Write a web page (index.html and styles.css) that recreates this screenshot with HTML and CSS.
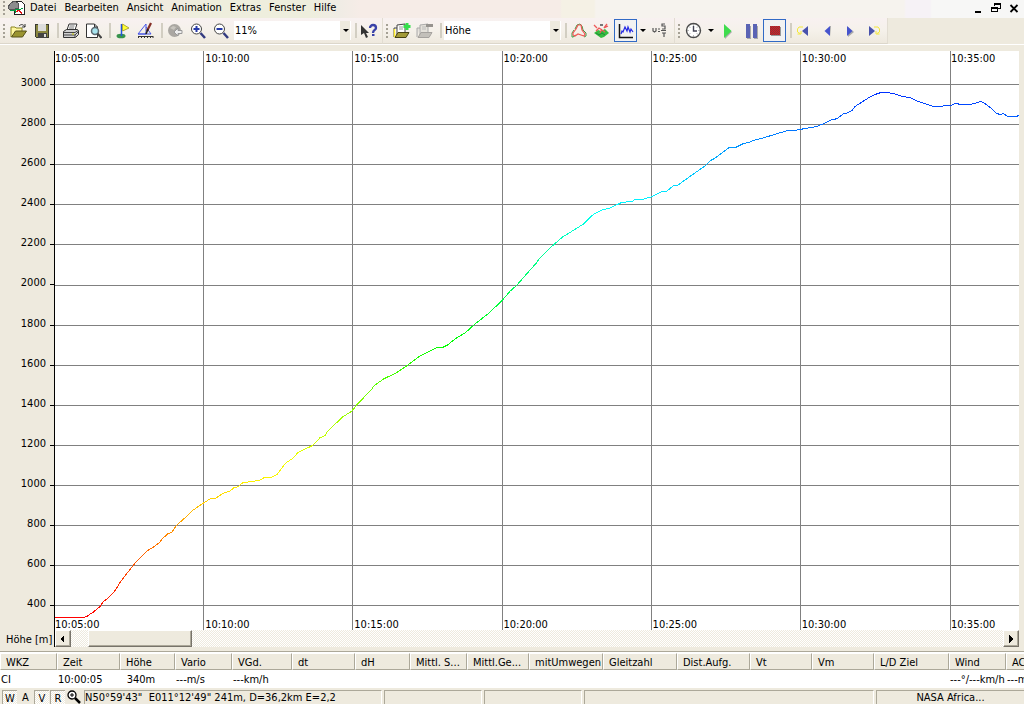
FILE: index.html
```html
<!DOCTYPE html>
<html lang="de">
<head>
<meta charset="utf-8">
<title>Höhe</title>
<link rel="stylesheet" href="styles.css">
</head>
<body>
<header class="menubar">
  <span class="grip"></span>
  <svg class="app-icon" width="18" height="16" viewBox="0 0 18 16" shape-rendering="crispEdges"><path d="M6 1h7l3 3v10H6z" fill="#fff" stroke="#222"/><path d="M0 7l2-3 4-3 4 2 1 5-4 1H1z" fill="#8c8c8c" stroke="#555"/><path d="M2 10h5v3M7 9l4 1 4-2" fill="none" stroke="#00a040"/><path d="M8 12l3-2 3 4" fill="none" stroke="#e01010"/></svg>
  <nav class="menus">
    <button>Datei</button><button>Bearbeiten</button><button>Ansicht</button><button>Animation</button><button>Extras</button><button>Fenster</button><button>Hilfe</button>
  </nav>
  <div class="window-controls">
    <button aria-label="Minimieren"><svg width="10" height="10" viewBox="0 0 10 10" shape-rendering="crispEdges"><path d="M2 8h6v2H2z"/></svg></button>
    <button aria-label="Wiederherstellen"><svg width="10" height="10" viewBox="0 0 10 10" shape-rendering="crispEdges"><path d="M3 0h7v6H7V5h2V2H4v1H3zM0 4h7v5H0zM1 6v2h5V6z" fill-rule="evenodd"/></svg></button>
    <button aria-label="Schließen"><svg width="10" height="10" viewBox="0 0 10 10"><path d="M1.500 2l7 7M8.500 2l-7 7" stroke="#000" stroke-width="1.800"/></svg></button>
  </div>
</header>

<div class="toolbars">
  <div class="band">
    <span class="grip"></span>
    <button class="tool" aria-label="Öffnen"><svg width="18" height="16" viewBox="0 0 18 16"><path d="M1 14V4h4l1 1h6v3" fill="#fff7a0" stroke="#8a8420"/><path d="M1.500 14l4-6h11l-4 6z" fill="#9a9430" stroke="#55501a"/><path d="M9 3c2-2 4-2 6 1M15 1v3h-3" fill="none" stroke="#333"/></svg></button>
    <button class="tool" aria-label="Speichern"><svg width="16" height="16" viewBox="0 0 16 16" shape-rendering="crispEdges"><path d="M1 1h14v14H2l-1-1z" fill="#8a8740"/><path d="M1.500 1.500h13v13h-12l-1-1z" fill="none" stroke="#3a3a30"/><path d="M4 1h8v7H4z" fill="#dcdcdc"/><path d="M4 10h9v5H4z" fill="#444"/><path d="M10 11h2v3h-2z" fill="#ddd"/></svg></button>
    <span class="sep"></span>
    <button class="tool" aria-label="Drucken"><svg width="18" height="16" viewBox="0 0 18 16"><path d="M5 7l2-6h8l-2 6" fill="#fff" stroke="#333"/><path d="M7.500 3h5M7 5h5" stroke="#777"/><path d="M1.500 8.500l3-2h11l1 1v4l-3 3h-12z" fill="#d0d0d0" stroke="#333"/><path d="M2 9.500h11l3-2M2 12h11v2M13 12l3-3" fill="none" stroke="#444"/><path d="M10 11h2" stroke="#cc0"/></svg></button>
    <button class="tool" aria-label="Seitenansicht"><svg width="17" height="16" viewBox="0 0 17 16"><path d="M1.500 1h8l3 3v10.500h-11z" fill="#fff" stroke="#333"/><path d="M9.500 1v3h3" fill="none" stroke="#333"/><circle cx="10" cy="8" r="3.500" fill="#a8e4ee" stroke="#5b6870" stroke-width="1.500"/><path d="M12.500 10.500l4 4.500" stroke="#444" stroke-width="2"/></svg></button>
    <span class="sep"></span>
    <button class="tool" aria-label="Flagge"><svg width="16" height="16" viewBox="0 0 16 16"><ellipse cx="6" cy="13" rx="4.500" ry="2.300" fill="#37934c"/><path d="M6.500 1v12" stroke="#2255dd" stroke-width="1.500"/><path d="M7.500 1l6.500 4-6.500 3z" fill="#ff3" stroke="#b2a936"/></svg></button>
    <button class="tool" aria-label="Zeichnen"><svg width="17" height="17" viewBox="0 0 17 17"><path d="M1 12L9 2v10zM9 5l5 7H1" fill="none" stroke="#4656e8"/><path d="M14 1l-4 8" stroke="#852f26" stroke-width="2.200"/><path d="M11 7l-2 5" stroke="#222" stroke-width="1.600"/><path d="M1 14.500h15M1.500 14v2M4.500 14v2M7.500 14v2M10.500 14v2M13.500 14v2M16 14v2" stroke="#333"/></svg></button>
    <span class="sep"></span>
    <button class="tool" aria-label="Globus"><svg width="16" height="16" viewBox="0 0 16 16"><circle cx="7.500" cy="7.500" r="6.500" fill="#aaa7a2"/><path d="M3 5l3-2 3 1-2 3z" fill="#c8c5bf"/><path d="M7 9l4-4v2.500h4v3h-4V13z" fill="#eee" stroke="#999"/></svg></button>
    <button class="tool" aria-label="Vergrößern"><svg width="16" height="16" viewBox="0 0 16 16"><circle cx="6.500" cy="6" r="5" fill="#fff" stroke="#444"/><path d="M3.500 6h6M6.500 3v6" stroke="#2639a8" stroke-width="2"/><path d="M10.500 10l4.500 5" stroke="#333b80" stroke-width="2.500"/></svg></button>
    <button class="tool" aria-label="Verkleinern"><svg width="16" height="16" viewBox="0 0 16 16"><circle cx="6.500" cy="6" r="5" fill="#fff" stroke="#444"/><path d="M3.500 6h6" stroke="#2639a8" stroke-width="2"/><path d="M10.500 10l4.500 5" stroke="#333b80" stroke-width="2.500"/></svg></button>
    <span class="combo"><select aria-label="Zoom"><option>11%</option></select></span>
    <span class="sep"></span>
    <button class="tool" aria-label="Kontexthilfe"><svg width="18" height="16" viewBox="0 0 18 16"><path d="M1 2v10l3-2 2 5 2-1-2-4h3z" fill="#333"/><path d="M10 5c0-4 6-4 6 0 0 2-3 2-3 5" fill="none" stroke="#3942a8" stroke-width="2.300"/><path d="M12 11h2.500v2H12z" fill="#3942a8"/></svg></button>
  </div>
  <div class="band">
    <span class="grip"></span>
    <button class="tool" aria-label="Flug hinzufügen"><svg width="18" height="17" viewBox="0 0 18 17"><path d="M1 15V6h3M4 13V3l8-1v9" fill="#fff" stroke="#444"/><path d="M1.500 7v8" stroke="#fe3" stroke-width="1.500"/><path d="M6 5h4M6 7h4" stroke="#999"/><path d="M2 15.500l3-5h11l-3 5z" fill="#a29a38" stroke="#464213"/><path d="M10.500 4.500h7M14 1v7" stroke="#36df4c" stroke-width="3"/></svg></button>
    <button class="tool" aria-label="Flug entfernen"><svg width="18" height="17" viewBox="0 0 18 17"><path d="M1 15V6h3M4 13V3l8-1v9" fill="#e4e1da" stroke="#aaa"/><path d="M6 5h4M6 7h4" stroke="#bbb"/><path d="M2 15.500l3-5h11l-3 5z" fill="#c3c0ba" stroke="#a5a29e"/><path d="M10 3.500h7" stroke="#96938f" stroke-width="3"/></svg></button>
    <span class="sep"></span>
    <span class="combo"><select aria-label="Anzeige"><option>Höhe</option></select></span>
    <span class="sep"></span>
    <button class="tool" aria-label="Strecke"><svg width="16" height="16" viewBox="0 0 16 16"><path d="M4 6l2-4 3-1 2 2 1 4 3 3v3l-2 1M5 12l-3 2H1v-4l2-3" fill="none" stroke="#3a9c48"/><path d="M2 12v-2l3-4 2-4h3l1 5 3 4-1 2-3-1-3-1-3 2z" fill="none" stroke="#f25555" stroke-width="1.200"/></svg></button>
    <button class="tool" aria-label="3D-Ansicht"><svg width="17" height="16" viewBox="0 0 17 16"><path d="M1 10l4-3 3 1 4-2 4 4-5 4-3 1z" fill="#35bd3f"/><path d="M3 10l3 2 3-2 3 2" stroke="#1f8a38" fill="none"/><path d="M1 2l3 3M3 8l3-3 6 4M14 1l-3 4 4-2M7 10l2-4" fill="none" stroke="#ed5959" stroke-width="1.300"/><path d="M7 1h3v2H7z" fill="#777"/></svg></button>
    <button class="tool active first" aria-label="Diagramm"><svg width="16" height="16" viewBox="0 0 16 16"><path d="M1.500 1v13.500H15" fill="none" stroke="#111" stroke-width="1.500"/><path d="M3 11l1-3 1 1 2-5 2 4 1-4 2 5 1-3 2 3" fill="none" stroke="#2429e4" stroke-width="1.200"/></svg></button>
    <button class="drop" aria-label="Diagrammtyp"></button>
    <button class="tool" aria-label="Geschwindigkeit"><svg width="16" height="16" viewBox="0 0 16 16"><g fill="none" stroke="#555" stroke-width="1.200"><path d="M1 5v3l1.500 1L4 8V5M6 6h2M6 8.500h2M9 7.500h5M13 1h-3v2h3v3h-3M10 10h4M12 10v4"/></g></svg></button>
  </div>
  <div class="band">
    <span class="grip"></span>
    <button class="tool" aria-label="Zeit"><svg width="17" height="17" viewBox="0 0 17 17"><circle cx="8.500" cy="8.500" r="7" fill="#fff" stroke="#4b4b4b" stroke-width="1.400"/><path d="M8.500 4v5H12" fill="none" stroke="#445" stroke-width="1.400"/><path d="M8.500 2.500v1M8.500 13.500v1M2.500 8.500h1M13.500 8.500h1M4 4.500l1 1M13 4.500l-1 1M4 12.500l1-1M13 12.500l-1-1" stroke="#777"/></svg></button>
    <button class="drop" aria-label="Zeitfaktor"></button>
    <button class="tool" aria-label="Start"><svg width="16" height="16" viewBox="0 0 16 16"><path d="M5 3v13l7-7z" fill="#aaa"/><path d="M4 1v14l7.500-7z" fill="#3fdc4d"/></svg></button>
    <button class="tool" aria-label="Pause"><svg width="16" height="16" viewBox="0 0 16 16" shape-rendering="crispEdges"><path d="M4 3h4v13H4zM11 3h4v13h-4z" fill="#aaa"/><path d="M3 1h4v14H3zM10 1h4v14h-4z" fill="#5a63b4"/></svg></button>
    <button class="tool active first" aria-label="Stopp"><svg width="16" height="16" viewBox="0 0 16 16" shape-rendering="crispEdges"><defs><pattern id="red" width="2" height="2" patternUnits="userSpaceOnUse"><path d="M0 0h2v2H0z" fill="#d81b22"/><path d="M0 0h1v1H0zM1 1h1v1H1z" fill="#82383d"/></pattern></defs><path d="M4 4h10v9H4z" fill="#999"/><path d="M3 3h10v9H3z" fill="url(#red)"/></svg></button>
    <span class="sep"></span>
    <button class="tool" aria-label="Anfang"><svg width="16" height="16" viewBox="0 0 16 16"><path d="M12 3v10L6 8z" fill="#4852ac"/><path d="M7 4H3L1.500 6v3L4 10.500M1.500 11H5V8" fill="none" stroke="#f4e83a"/></svg></button>
    <button class="tool" aria-label="Zurück"><svg width="16" height="16" viewBox="0 0 16 16"><path d="M12 3v11L11 3z" fill="#aaa"/><path d="M11 3v10L5.500 8z" fill="#4654cd"/></svg></button>
    <button class="tool" aria-label="Vor"><svg width="16" height="16" viewBox="0 0 16 16"><path d="M6 4v10l6-5z" fill="#aaa"/><path d="M5 3v10l5.500-5z" fill="#4654cd"/></svg></button>
    <button class="tool" aria-label="Ende"><svg width="16" height="16" viewBox="0 0 16 16"><path d="M4 3v10l6-5z" fill="#4852ac"/><path d="M9 4h4l1.500 2v3L12 10.500M14.500 11H11V8" fill="none" stroke="#f4e83a"/></svg></button>
  </div>
</div>

<main class="chart">
  <ol class="scale">
    <li>3000</li><li>2800</li><li>2600</li><li>2400</li><li>2200</li><li>2000</li><li>1800</li><li>1600</li><li>1400</li><li>1200</li><li>1000</li><li>800</li><li>600</li><li>400</li>
  </ol>
  <div class="plot">
    <svg class="graph" viewBox="55 51 964 579" preserveAspectRatio="none" shape-rendering="crispEdges">
      <defs>
        <linearGradient id="height" gradientUnits="userSpaceOnUse" x1="0" y1="617" x2="0" y2="92">
          <stop offset="0" stop-color="#f00"/><stop offset=".06" stop-color="#ff3000"/><stop offset=".15" stop-color="#ff8000"/><stop offset=".25" stop-color="#ffee00"/><stop offset=".3" stop-color="#f0ff00"/><stop offset=".41" stop-color="#80ff00"/><stop offset=".52" stop-color="#00ff00"/><stop offset=".6" stop-color="#00ff40"/><stop offset=".7" stop-color="#00ffa0"/><stop offset=".78" stop-color="#00ffff"/><stop offset=".87" stop-color="#00b0ff"/><stop offset=".94" stop-color="#0068ff"/><stop offset="1" stop-color="#0030ff"/>
        </linearGradient>
      </defs>
      <path class="grid" d="M55 84.500H1019M55 124.500H1019M55 164.500H1019M55 204.500H1019M55 244.500H1019M55 285.500H1019M55 325.500H1019M55 365.500H1019M55 405.500H1019M55 445.500H1019M55 485.500H1019M55 525.500H1019M55 565.500H1019M55 605.500H1019M203.500 51V630M352.500 51V630M502.500 51V630M651.500 51V630M800.500 51V630M950.500 51V630"/>
      <polyline class="curve" points="55,617.500 84,617.500 87,616.300 90,614 93,612.300 97,609 100,606.700 103,602 108,598 114,592 118,586 121,581 128,572 136,562 148,550.300 154,546.700 160,542 162,539 168,533.700 172,532 177,524.700 183,519.700 192,511 197,507.300 203,503.300 210,499 216,498 223,493.300 230,491 234,487.700 238,486.700 243,482.500 253,481.500 260,480 264,477.700 272,477 277,474.700 282,467.700 286,462.700 293,458.300 298,452.500 313,445.300 320,437.700 325,435.700 328,430.700 343,416.700 352,411 357,404.500 364,397.300 372,389 374,385.700 384,378.700 396,373 407,365.700 419,356.700 428,352 437,347.700 443,347.300 448,344.700 455,339 465,333 475,324 490,312.300 495,307.300 502,300.500 510,291.300 517,285 527,273.500 537,262.300 539,259 550,248 553,245.300 563,236.700 567,234.300 575,229.300 584,223.700 590,217.300 595,213.300 603,209.700 610,208 622,202.300 632,201.500 635,199.500 644,199 652,196.700 662,191.700 667,191 673,186 678,185 693,174.300 705,166 711,160.300 714,158.700 722,153 729,147.700 736,147.300 743,143.700 749,142.300 753,140.500 762,138.300 775,134.300 787,130.700 795,130.300 817,126.500 822,124.300 832,119.700 837,118.700 843,114 848,112.700 852,110.500 855,106.500 869,97.500 875,94.500 881,92.500 888,92.500 897,94.500 902,96.500 910,97.500 916,100.700 925,103.700 933,106.300 939,107 945,105.500 951,105.300 955,103.500 962,104.500 970,104.300 975,103.500 980,101.500 983,102.300 990,107.300 997,113.700 1001,114.500 1003,113.500 1008,116.500 1016,116.500 1019,115.500"/>
    </svg>
    <div class="times top"><span>10:05:00</span><span>10:10:00</span><span>10:15:00</span><span>10:20:00</span><span>10:25:00</span><span>10:30:00</span><span>10:35:00</span></div>
    <div class="times bottom"><span>10:05:00</span><span>10:10:00</span><span>10:15:00</span><span>10:20:00</span><span>10:25:00</span><span>10:30:00</span><span>10:35:00</span></div>
  </div>
  <label class="unit" for="scroll">Höhe [m]</label>
  <div class="scrollbar">
    <button class="arrow" aria-label="Nach links"><svg width="8" height="8" viewBox="0 0 8 8" shape-rendering="crispEdges"><path d="M1 4l4-4v8z"/></svg></button>
    <input id="scroll" type="range" min="0" max="100" value="2">
    <button class="arrow" aria-label="Nach rechts"><svg width="8" height="8" viewBox="0 0 8 8" shape-rendering="crispEdges"><path d="M6 4L2 0v8z"/></svg></button>
  </div>
</main>

<section class="values">
  <table>
    <colgroup><col class="w57"><col class="w63"><col class="w55"><col class="w57"><col class="w60"><col class="w63"><col class="w55"><col class="w57"><col class="w62"><col class="w74"><col class="w74"><col class="w73"><col class="w62"><col class="w62"><col class="w75"><col class="w57"><col class="w57"></colgroup>
    <thead><tr><th>WKZ</th><th>Zeit</th><th>Höhe</th><th>Vario</th><th>VGd.</th><th>dt</th><th>dH</th><th>Mittl. S...</th><th>Mittl.Ge...</th><th>mitUmwegen</th><th>Gleitzahl</th><th>Dist.Aufg.</th><th>Vt</th><th>Vm</th><th>L/D Ziel</th><th>Wind</th><th>AC</th></tr></thead>
    <tbody><tr><td>CI</td><td>10:00:05</td><td class="center">340m</td><td>---m/s</td><td>---km/h</td><td></td><td></td><td></td><td></td><td></td><td></td><td></td><td></td><td></td><td></td><td>---°/---km/h</td><td>---m</td></tr></tbody>
  </table>
</section>

<footer class="status">
  <button class="flag on">W</button><button class="flag">A</button><button class="flag on">V</button><button class="flag on">R</button>
  <button class="lens" aria-label="Lupe"><svg width="14" height="14" viewBox="0 0 14 14"><circle cx="5" cy="5" r="4" fill="#fff" stroke="#000" stroke-width="1.300"/><path d="M3 5h4M5 3v4" stroke="#000"/><path d="M8 8l5 5" stroke="#000" stroke-width="2.500"/></svg></button>
  <span class="pane position">N50°59'43"&nbsp; E011°12'49" 241m, D=36,2km E=2,2</span>
  <span class="pane small"></span>
  <span class="pane small"></span>
  <span class="pane wide"></span>
  <span class="pane map">NASA Africa...</span>
</footer>
</body>
</html>
```
FILE: styles.css
```css
* { box-sizing: border-box; }

html, body { height: 100%; }

body {
  margin: 0;
  display: flex;
  flex-direction: column;
  overflow: hidden;
  background: #eeeade;
  color: #000;
  font: 11px/14px "DejaVu Sans Condensed", "Noto Sans", sans-serif;
}

button, select {
  margin: 0;
  padding: 0;
  border: 0;
  background: transparent;
  color: inherit;
  font: inherit;
}

svg { display: block; flex: none; }

.grip {
  flex: none;
  width: 2px;
  height: 14px;
  background: repeating-linear-gradient(#a5a195 0 2px, transparent 2px 4px);
}

/* menu bar */
.menubar {
  flex: none;
  display: flex;
  align-items: center;
  height: 18px;
  padding: 0 5px 3px 3px;
  background: linear-gradient(90deg, #f0ece0 0 190px, #eeeedd 190px 310px, #f0ece5 340px, #f6ece7 360px 560px, #f5f1e5 562px 594px, #f6f3ee 596px 904px, #f6f2f6 906px 930px, #f7f7f6 932px);
}

.app-icon { margin-left: 3px; }
.menus { display: flex; }
.menus button { padding: 0 4px; }

.window-controls { display: flex; gap: 8px; margin-left: auto; }

/* toolbars */
.toolbars {
  flex: none;
  display: flex;
  height: 27px;
  border-bottom: 1px solid #fff;
}

.band {
  display: flex;
  align-items: center;
  padding: 0 2px 0 3px;
  border-right: 1px solid #e2ddd2;
  border-bottom: 1px solid #dcd7cb;
  background: linear-gradient(#f8f1f1, #f5f1ea 50%, #eee9de);
}

.band .grip { margin-right: 2px; }
.band + .band { padding: 0 3px; }

.tool {
  display: flex;
  align-items: center;
  justify-content: center;
  flex: none;
  width: 23px;
  height: 23px;
}

.tool.active { border: 1px solid #316ac5; background: #f2f2f2; }
.tool.first { margin-left: 1px; }

.sep {
  flex: none;
  width: 6px;
  height: 15px;
  padding-left: 3px;
  border-right: 2px solid #d2cec2;
}

.drop {
  flex: none;
  width: 11px;
  height: 23px;
  display: flex;
  align-items: center;
  justify-content: center;
}

.drop::before, .combo::after {
  content: "";
  border: 3px solid transparent;
  border-top-color: #000;
  border-bottom: 0;
}

.combo {
  display: flex;
  position: relative;
  margin-left: 2px;
}

.combo select {
  appearance: none;
  width: 117px;
  height: 19px;
  padding: 0 1px;
  background: linear-gradient(90deg, #fff 106px, #eeeade 106px 116px, #fff 116px);
}

.combo::after {
  position: absolute;
  right: 2px;
  top: 8px;
  pointer-events: none;
}

/* diagram */
.chart {
  flex: 1;
  min-height: 0;
  display: grid;
  grid-template-columns: 54px minmax(0, 1fr);
  grid-template-rows: minmax(0, 1fr) 17px;
  padding: 6px 5px 4px 0;
}

.scale {
  display: flex;
  flex-direction: column;
  margin: 0;
  padding: 13px 0 5px;
  list-style: none;
  text-align: right;
}

.scale li {
  flex: 1;
  display: flex;
  align-items: center;
  justify-content: flex-end;
  position: relative;
  padding: 0 8px 2px 0;
}

.scale li::after {
  content: "";
  position: absolute;
  right: 0;
  top: 50%;
  width: 4px;
  height: 1px;
  background: #000;
}

.plot {
  display: grid;
  grid-template: minmax(0, 1fr) / minmax(0, 1fr);
  border-left: 1px solid #000;
  background: #fff;
}

.plot > * { grid-area: 1 / 1; }
.graph { width: 100%; height: 100%; }
.grid { stroke: #808080; fill: none; vector-effect: non-scaling-stroke; }
.curve { stroke: url(#height); fill: none; vector-effect: non-scaling-stroke; }

.times {
  display: grid;
  grid-template-columns: repeat(6, minmax(0, 149fr)) minmax(0, 69fr);
  overflow: hidden;
}

.times.top { line-height: 16px; }
.times.bottom { align-self: end; line-height: 10px; overflow: visible; }
.times span:nth-child(n+2) { padding-left: 1px; }

.unit { align-self: center; padding: 2px 0 0 6px; white-space: nowrap; }

.scrollbar {
  display: flex;
  border-left: 1px solid #000;
  background: repeating-conic-gradient(#fff 0 25%, #eeeade 0 50%) 0 0 / 2px 2px;
}

.arrow {
  flex: none;
  display: flex;
  align-items: center;
  justify-content: center;
  width: 16px;
  height: 17px;
  background: #eeeade;
  border: 1px solid;
  border-color: #fff #77736a #77736a #fff;
  box-shadow: inset -1px -1px #aca899;
}

.scrollbar input {
  appearance: none;
  flex: 1;
  min-width: 0;
  height: 17px;
  margin: 0;
  background: transparent;
}

.scrollbar input::-webkit-slider-thumb {
  appearance: none;
  width: 104px;
  height: 17px;
  background: #eeeade;
  border: 1px solid;
  border-color: #fff #77736a #77736a #fff;
  box-shadow: inset -1px -1px #aca899;
}

/* value table */
.values {
  flex: none;
  overflow: hidden;
  border-top: 1px solid #aca899;
  background: #fff;
}

table { table-layout: fixed; width: 1063px; border-collapse: separate; border-spacing: 0; margin-top: 1px; }
.w55 { width: 55px; }
.w57 { width: 57px; }
.w60 { width: 60px; }
.w62 { width: 62px; }
.w63 { width: 63px; }
.w73 { width: 73px; }
.w74 { width: 74px; }
.w75 { width: 75px; }

th, td { padding: 0; text-align: left; font-weight: normal; white-space: nowrap; }

th {
  height: 17px;
  padding: 2px 0 0 5px;
  border: 1px solid;
  border-color: #fff #aca899 #aca899 #fff;
  background: #eeeade;
  line-height: 13px;
}

td { height: 18px; padding: 2px 0 0 1px; }
td.center { text-align: center; padding-right: 14px; }

/* status bar */
.status {
  flex: none;
  display: flex;
  height: 16px;
  padding: 2px 0 0 2px;
  overflow: hidden;
}

.flag { width: 15px; height: 16px; margin-right: 1px; }

.flag.on {
  border-top: 1px solid #aca899;
  border-left: 1px solid #aca899;
  background: repeating-conic-gradient(#fff 0 25%, #eeeade 0 50%) 0 0 / 2px 2px;
}

.lens { padding: 0 3px 0 1px; }

.pane {
  flex: none;
  height: 17px;
  margin-right: 2px;
  border: 1px solid;
  border-color: #aca899 #fff #fff #aca899;
  white-space: nowrap;
}

.position { width: 298px; }
.small { width: 98px; }
.wide { flex: 1; }
.map { width: 148px; margin-right: 0; text-align: center; border-right: 0; }
```
